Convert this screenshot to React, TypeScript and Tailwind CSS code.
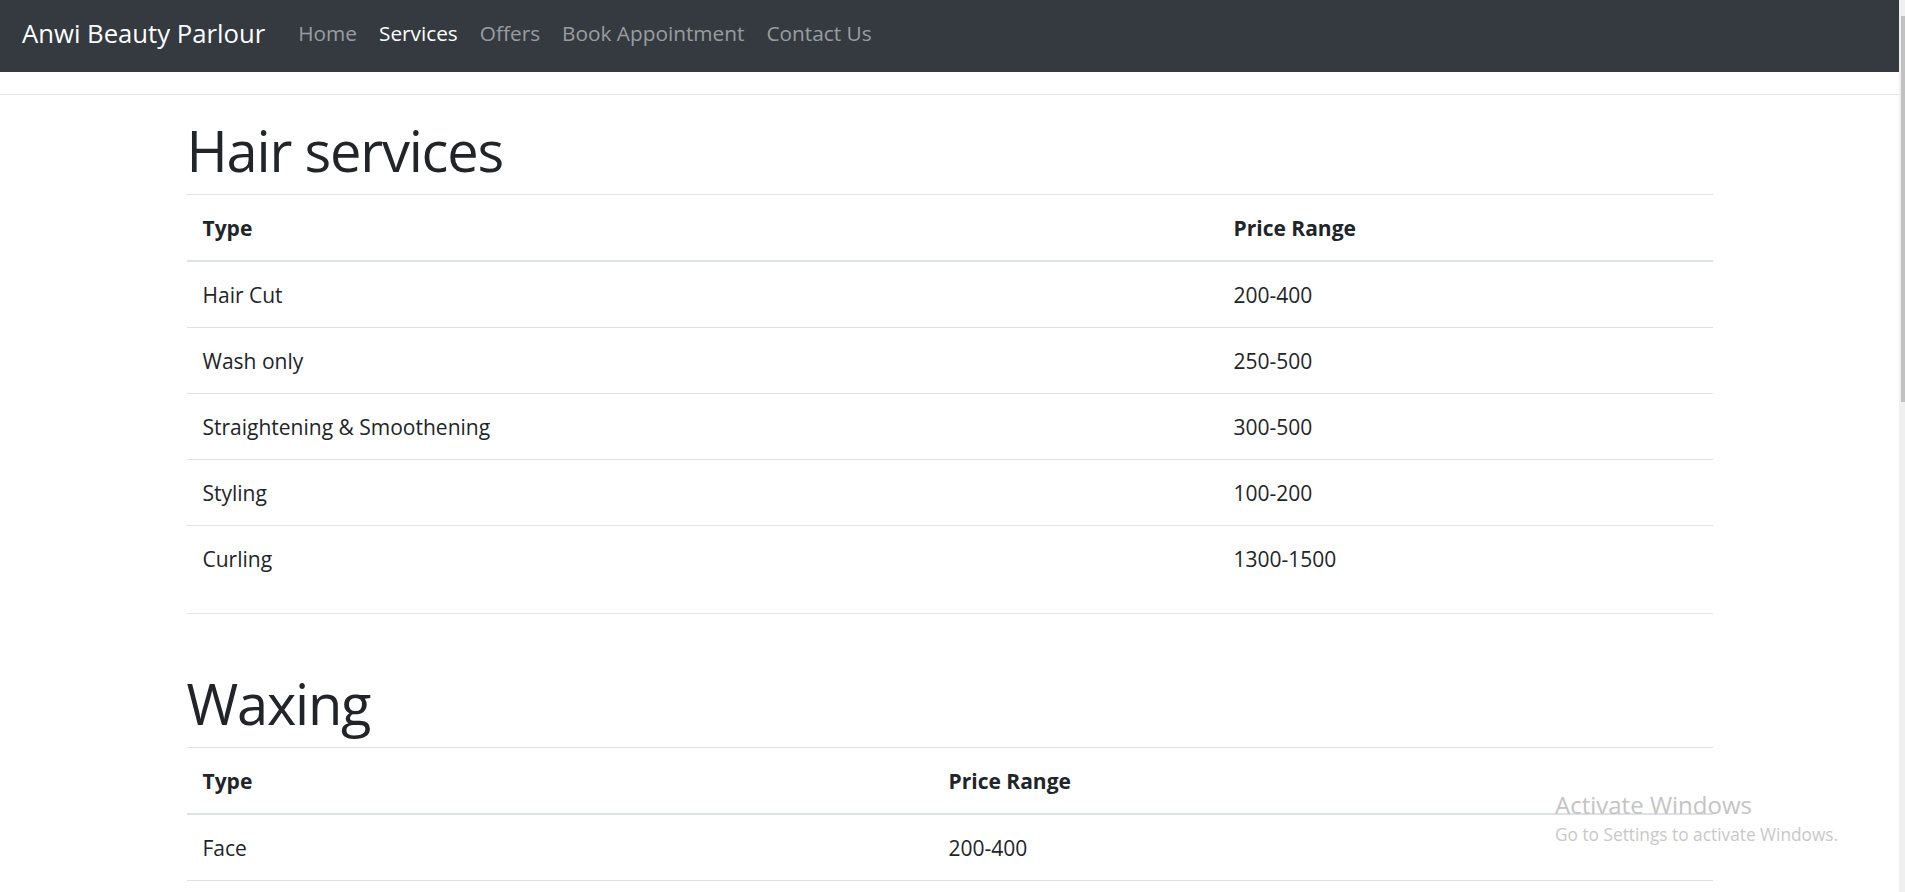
const hairServices = [
  ["Hair Cut", "200-400"],
  ["Wash only", "250-500"],
  ["Straightening & Smoothening", "300-500"],
  ["Styling", "100-200"],
  ["Curling", "1300-1500"],
];

const waxing = [["Face", "200-400"]];

const links = [
  { label: "Home", active: false },
  { label: "Services", active: true },
  { label: "Offers", active: false },
  { label: "Book Appointment", active: false },
  { label: "Contact Us", active: false },
];

function PriceTable({
  rows,
  typeWidth,
  lastBorder,
}: {
  rows: string[][];
  typeWidth: string;
  lastBorder: boolean;
}) {
  return (
    <table className="w-full table-fixed border-separate border-spacing-0 text-[21px]">
      <thead>
        <tr>
          <th
            className={`${typeWidth} border-t border-b-2 border-[#dee2e6] pl-4 pr-[15px] pt-[17px] pb-[15px] text-left font-bold leading-[33px]`}>
            Type
          </th>
          <th className="border-t border-b-2 border-[#dee2e6] pl-4 pr-[15px] pt-[17px] pb-[15px] text-left font-bold leading-[33px]">
            Price Range
          </th>
        </tr>
      </thead>
      <tbody>
        {rows.map(([type, price], i) => {
          const line =
            i < rows.length - 1 || lastBorder
              ? "border-b border-[#dee2e6]"
              : "";
          return (
            <tr key={type}>
              <td className={`${line} pl-4 pr-[15px] pt-[17px] pb-[15px] leading-[33px]`}>{type}</td>
              <td className={`${line} pl-4 pr-[15px] pt-[17px] pb-[15px] leading-[33px]`}>{price}</td>
            </tr>
          );
        })}
      </tbody>
    </table>
  );
}

function App() {
  return (
    <div className="relative flex h-[892px] overflow-hidden bg-white font-['Open_Sans',sans-serif] text-[#212529]">
      <div className="w-[1899px] shrink-0">
        <nav className="flex h-[72px] items-center bg-[#343a40] px-[22px] pb-1">
          <span className="mr-[22px] text-[25.7px] text-white">Anwi Beauty Parlour</span>
          <ul className="flex">
            {links.map((l) => (
              <li key={l.label}>
                <a
                  href="#"
                  className={`px-[11px] text-[20.8px] ${l.active ? "text-white" : "text-white/50"}`}>
                  {l.label}
                </a>
              </li>
            ))}
          </ul>
        </nav>
        <hr className="mt-[22px] border-t border-[#e5e5e5]" />

        <main className="mx-auto w-[1526px]">
          <h1 className="mt-[22px] mb-[10px] text-[56px] leading-[67px] font-medium tracking-[-1.2px]">
            Hair services
          </h1>
          <PriceTable rows={hairServices} typeWidth="w-[1031px]" lastBorder={false} />

          <hr className="mt-[22px] border-t border-[#e5e5e5]" />

          <h1 className="mt-[56px] mb-[10px] text-[56px] leading-[67px] font-medium tracking-[-1.2px]">
            Waxing
          </h1>
          <PriceTable rows={waxing} typeWidth="w-[746px]" lastBorder={true} />
        </main>
      </div>

      {/* scrollbar */}
      <div className="w-[6px] shrink-0 bg-[#f0f0f0] pt-4 pl-[2px]">
        <div className="h-[386px] w-[4px] bg-[#c1c1c1]" />
      </div>

      {/* windows watermark */}
      <div className="pointer-events-none absolute left-[1555px] top-[789px]">
        <div className="text-[24px] leading-[32px] text-[#c4c4c4]">Activate Windows</div>
        <div className="mt-[3px] text-[17.3px] leading-[21px] text-[#c8c8c8]">
          Go to Settings to activate Windows.
        </div>
      </div>
    </div>
  );
}

export default App;
